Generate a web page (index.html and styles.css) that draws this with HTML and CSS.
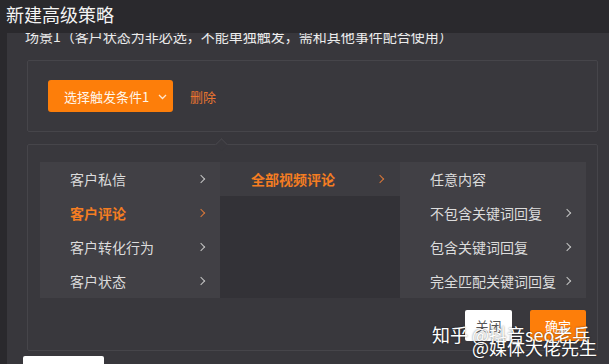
FILE: index.html
```html
<!DOCTYPE html>
<html lang="zh-CN">
<head>
  <meta charset="UTF-8">
  <title>新建高级策略</title>
  <link rel="stylesheet" href="styles.css">
</head>
<body>

  <h1 class="title">新建高级策略</h1>

  <div class="panel">
    <div class="scene">场景1（客户状态为非必选，不能单独触发，需和其他事件配合使用）</div>

    <!-- trigger selector -->
    <div class="box box-trigger">
      <button class="btn-select">选择触发条件1
        <svg class="chev-down" width="9" height="6" viewBox="0 0 9 6"><polyline points="1,1 4.5,4.5 8,1" fill="none" stroke="#ffe7cf" stroke-width="1.3"/></svg>
      </button>
      <span class="link-del">删除</span>
    </div>

    <!-- condition cascader -->
    <div class="box box-cond">
      <span class="caret"></span>
      <div class="cascader">
        <ul class="col col-1">
          <li>客户私信<i class="arr"></i></li>
          <li class="active">客户评论<i class="arr"></i></li>
          <li>客户转化行为<i class="arr"></i></li>
          <li>客户状态<i class="arr"></i></li>
        </ul>
        <ul class="col col-2">
          <li class="active">全部视频评论<i class="arr"></i></li>
        </ul>
        <ul class="col col-3">
          <li>任意内容</li>
          <li>不包含关键词回复<i class="arr"></i></li>
          <li>包含关键词回复<i class="arr"></i></li>
          <li>完全匹配关键词回复<i class="arr"></i></li>
        </ul>
      </div>
      <div class="actions">
        <button class="btn btn-close">关闭</button>
        <button class="btn btn-ok">确定</button>
      </div>
    </div>

    <div class="next-btn"></div>
  </div>

  <div class="watermark">
    <span class="wm-1">知乎 @抖音seo老兵</span>
    <span class="wm-2">@媒体大佬先生</span>
  </div>

</body>
</html>
```

FILE: styles.css
```css
body {
  margin: 0;
  width: 609px;
  height: 364px;
  overflow: hidden;
  position: relative;
  background-color: #2a292d;
  font-family: "Microsoft YaHei", "Noto Sans CJK SC", sans-serif;
  color: #e2e2e2;
}
.title {
  margin: 0;
  height: 33px;
  padding-left: 6px;
  font-size: 18px;
  font-weight: normal;
  line-height: 28px;
  color: #f4f4f4;
}
.panel {
  margin-left: 7px;
  height: 331px;
  padding: 0 11px 0 20px;
  background-color: #38373c;
  overflow: hidden;
}
.scene {
  margin-top: -7px;
  margin-left: -2px;
  height: 34px;
  font-size: 14px;
  line-height: 20px;
  color: #ececec;
}
.box {
  border: 1px solid #46454a;
  border-radius: 2px;
  background-color: #39383d;
}
.box-trigger {
  display: flex;
  align-items: center;
  height: 32px;
  padding: 19px 20px 19px 20px;
}
.btn-select {
  display: flex;
  align-items: center;
  gap: 9px;
  height: 32px;
  width: 125px;
  padding: 0 0 0 16px;
  border: none;
  border-radius: 3px;
  background-color: #fd7e0a;
  color: #fff6ea;
  font-family: inherit;
  font-size: 13px;
}
.chev-down { margin-top: 1px; }
.link-del {
  margin-left: 17px;
  font-size: 13px;
  color: #ea7530;
}
.box-cond {
  position: relative;
  margin-top: 12px;
  padding: 17px 11px 9px 12px;
}
.caret {
  position: absolute;
  top: -5px;
  left: 189px;
  width: 8px;
  height: 8px;
  background-color: #39383d;
  border-left: 1px solid #46454a;
  border-top: 1px solid #46454a;
  transform: rotate(45deg);
}
.cascader {
  display: flex;
  height: 136px;
}
.col {
  list-style: none;
  margin: 0;
  padding: 0;
}
.col li {
  display: flex;
  align-items: center;
  justify-content: space-between;
  height: 34px;
  padding: 0 14px 0 30px;
  font-size: 14px;
  color: #dcdcdc;
}
.col li.active {
  color: #f47d22;
  font-weight: bold;
}
.col-1 {
  width: 180px;
  background-color: #414045;
}
.col-2 {
  width: 180px;
  background-color: #333237;
}
.col-2 li {
  background-color: #3d3c41;
  padding-left: 31px;
  padding-right: 15px;
}
.col-3 {
  width: 186px;
  background-color: #414045;
}
.arr {
  width: 5px;
  height: 5px;
  margin-right: 2px;
  border-top: 1.3px solid #c4c4c4;
  border-right: 1.3px solid #c4c4c4;
  transform: rotate(45deg);
}
.active .arr {
  border-color: #d9773a;
}
.actions {
  display: flex;
  justify-content: flex-end;
  gap: 18px;
  margin-top: 12px;
}
.btn {
  height: 31px;
  border: none;
  border-radius: 2px;
  font-family: inherit;
  font-size: 13px;
}
.btn-close {
  width: 47px;
  background-color: #ffffff;
  color: #555;
}
.btn-ok {
  width: 56px;
  background-color: #fd7e0a;
  color: #fff;
}
.next-btn {
  margin-top: 5px;
  margin-left: -4px;
  width: 81px;
  height: 20px;
  border-radius: 2px;
  background-color: #ffffff;
}
.watermark {
  position: absolute;
  left: 432px;
  top: 325px;
  width: 177px;
  font-size: 18px;
  line-height: 18px;
  color: #ffffff;
  text-shadow: 0 0 2px rgba(0, 0, 0, 0.6);
}
.wm-1 { display: block; }
.wm-2 {
  display: block;
  margin-top: -5px;
  margin-left: 40px;
}
```
